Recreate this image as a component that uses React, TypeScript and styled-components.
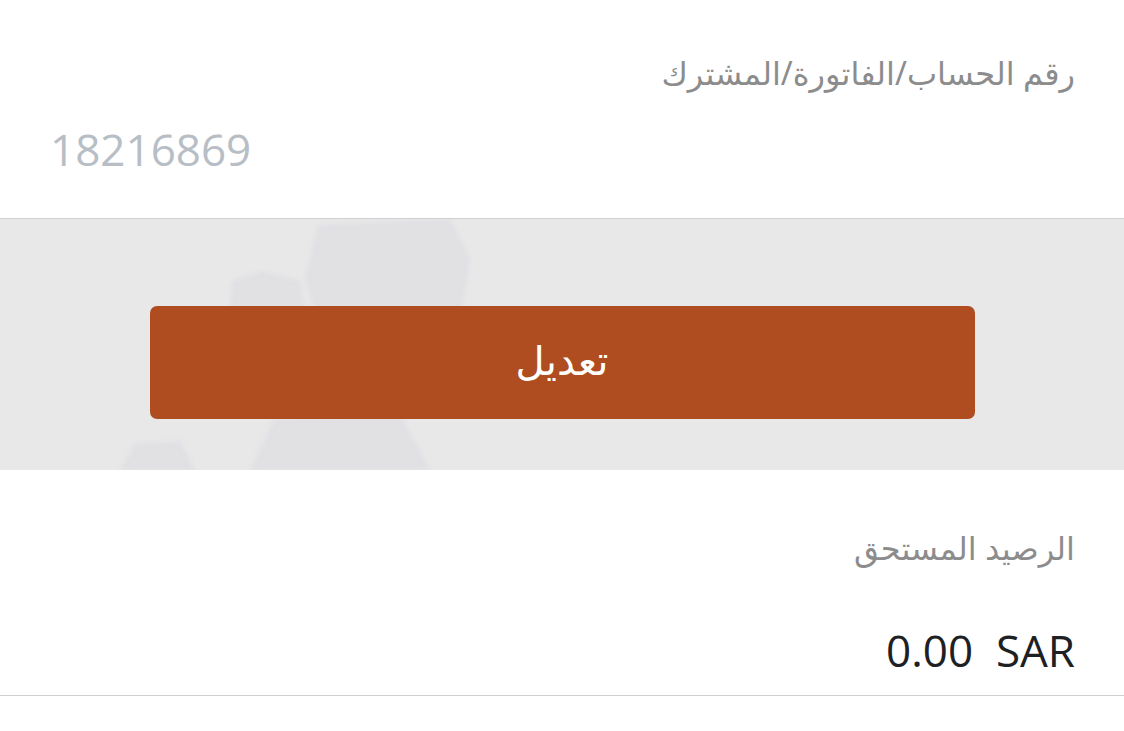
import styled, { createGlobalStyle } from "styled-components";

const GlobalStyle = createGlobalStyle`
  body {
    margin: 0;
    background: #ffffff;
    font-family: "Noto Sans", "DejaVu Sans", sans-serif;
  }
`;

const Page = styled.div`
  width: 1124px;
  display: flex;
  flex-direction: column;
`;

const Field = styled.section<{ $height: number; $top: number }>`
  height: ${(p) => p.$height}px;
  box-sizing: border-box;
  padding: ${(p) => p.$top}px 49px 0 50px;
  display: flex;
  flex-direction: column;
  border-bottom: 1px solid #cfcfcf;
`;

const Label = styled.div`
  direction: rtl;
  text-align: right;
  font-size: 32px;
  color: #8c8c8c;
  line-height: 40px;
`;

const Value = styled.div<{ $muted?: boolean; $align: "left" | "right"; $gap: number }>`
  margin-top: ${(p) => p.$gap}px;
  font-family: "Open Sans", "Noto Sans", sans-serif;
  font-size: 44px;
  line-height: 56px;
  text-align: ${(p) => p.$align};
  color: ${(p) => (p.$muted ? "#b7bec5" : "#1e2124")};
  white-space: pre;
`;

const Band = styled.div`
  position: relative;
  height: 251px;
  background: #e8e8e9;
  display: flex;
  justify-content: center;
  padding-top: 87px;
  box-sizing: border-box;
  overflow: hidden;
`;

const Backdrop = styled.svg`
  position: absolute;
  inset: 0;
  width: 100%;
  height: 100%;
  filter: blur(2px);
`;

const EditButton = styled.button`
  position: relative;
  width: 825px;
  height: 113px;
  padding: 0 0 6px;
  border: none;
  border-radius: 7px;
  background: #b04d20;
  color: #ffffff;
  font-family: "Noto Sans", "DejaVu Sans", sans-serif;
  font-size: 40px;
  direction: rtl;
  cursor: pointer;
`;

export default function App() {
  return (
    <Page>
      <GlobalStyle />
      <Field $height={219} $top={53}>
        <Label>رقم الحساب/الفاتورة/المشترك</Label>
        <Value $muted $align="left" $gap={28}>
          18216869
        </Value>
      </Field>
      <Band>
        <Backdrop viewBox="0 0 1124 251" preserveAspectRatio="none">
          <g fill="#d9d9df" opacity="0.5">
            <polygon points="318,6 450,0 470,40 455,130 330,140 305,60" />
            <polygon points="232,62 262,52 300,62 305,90 275,100 230,92" />
            <polygon points="250,251 275,200 400,195 430,251" />
            <polygon points="120,251 135,225 180,222 195,251" />
          </g>
        </Backdrop>
        <EditButton>تعديل</EditButton>
      </Band>
      <Field $height={226} $top={58}>
        <Label>الرصيد المستحق</Label>
        <Value $align="right" $gap={54}>
          {"0.00  SAR"}
        </Value>
      </Field>
    </Page>
  );
}
